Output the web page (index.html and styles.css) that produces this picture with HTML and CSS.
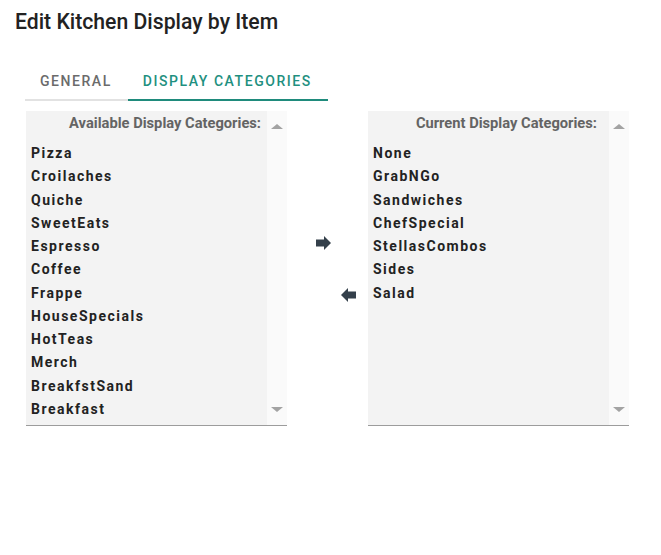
FILE: index.html
```html
<!DOCTYPE html>
<html>
<head>
<meta charset="utf-8">
<title>Edit Kitchen Display by Item</title>
<link rel="stylesheet" href="styles.css">
</head>
<body>
<div class="page">
  <h1 class="title">Edit Kitchen Display by Item</h1>
  <div class="tabs">
    <div class="tab">General</div>
    <div class="tab tab-active">Display Categories</div>
  </div>
  <div class="lists">
    <div class="listbox">
      <div class="list-area">
        <div class="list-header">Available Display Categories:</div>
        <ul class="items">
          <li>Pizza</li>
          <li>Croilaches</li>
          <li>Quiche</li>
          <li>SweetEats</li>
          <li>Espresso</li>
          <li>Coffee</li>
          <li>Frappe</li>
          <li>HouseSpecials</li>
          <li>HotTeas</li>
          <li>Merch</li>
          <li>BreakfstSand</li>
          <li>Breakfast</li>
        </ul>
      </div>
      <div class="scrollbar">
        <span class="tri tri-up"></span>
        <span class="tri tri-down"></span>
      </div>
    </div>
    <div class="movers">
      <button class="mover mover-right" aria-label="Add">
        <svg width="15" height="14" viewBox="0 0 15 14"><rect x="0" y="3.5" width="9" height="7" fill="#34404b"/><polygon points="8,0 15,7 8,14" fill="#34404b"/></svg>
      </button>
      <button class="mover mover-left" aria-label="Remove">
        <svg width="15" height="14" viewBox="0 0 15 14"><rect x="6" y="3.5" width="9" height="7" fill="#34404b"/><polygon points="7,0 0,7 7,14" fill="#34404b"/></svg>
      </button>
    </div>
    <div class="listbox">
      <div class="list-area">
        <div class="list-header list-header-current">Current Display Categories:</div>
        <ul class="items">
          <li>None</li>
          <li>GrabNGo</li>
          <li>Sandwiches</li>
          <li>ChefSpecial</li>
          <li>StellasCombos</li>
          <li>Sides</li>
          <li>Salad</li>
        </ul>
      </div>
      <div class="scrollbar">
        <span class="tri tri-up"></span>
        <span class="tri tri-down"></span>
      </div>
    </div>
  </div>
</div>
</body>
</html>
```
FILE: styles.css
```css
* { box-sizing: border-box; }
html, body { margin: 0; padding: 0; background: #fff; }
body { font-family: Roboto, "Liberation Sans", sans-serif; color: #222; }

.page { padding: 10px 0 0 0; }

.title {
  margin: 0;
  padding-left: 15px;
  font-size: 21.2px;
  line-height: 24px;
  font-weight: 500;
  color: #222;
}

.tabs {
  display: flex;
  margin: 27px 0 0 25px;
}
.tab {
  padding: 10px 16px 8px 15px;
  font-size: 14px;
  line-height: 20px;
  font-weight: 500;
  letter-spacing: 1.55px;
  text-transform: uppercase;
  color: #6b6b6b;
  border-bottom: 2px solid #e2e2e2;
}
.tab-active {
  color: #1f9080;
  border-bottom-color: #1f8b7c;
}

.lists {
  display: flex;
  margin: 10px 0 0 26px;
}
.listbox {
  display: flex;
  width: 261px;
  height: 315px;
  border-bottom: 1px solid #9c9c9c;
}
.list-area {
  flex: 1;
  background: #f3f3f3;
}
.list-header {
  padding: 2px 6px 0 0;
  text-align: right;
  font-size: 14.7px;
  line-height: 20px;
  font-weight: 700;
  color: #646464;
}
.list-header-current { padding-right: 12px; }
.items {
  list-style: none;
  margin: 9px 0 0 0;
  padding: 0 0 0 5px;
}
.items li {
  font-size: 14px;
  line-height: 23.27px;
  font-weight: 700;
  letter-spacing: 1.5px;
  color: #222;
}
.scrollbar {
  width: 20px;
  background: #fafafa;
  display: flex;
  flex-direction: column;
  align-items: center;
  justify-content: space-between;
  padding: 13px 0 13px 0;
}
.tri {
  width: 0;
  height: 0;
  border-left: 6px solid transparent;
  border-right: 6px solid transparent;
}
.tri-up { border-bottom: 5px solid #a3a3a3; }
.tri-down { border-top: 5px solid #a3a3a3; }

.movers {
  width: 81px;
  display: flex;
  flex-direction: column;
  align-items: flex-start;
}
.mover {
  display: block;
  padding: 0;
  margin: 0;
  border: 0;
  background: none;
  line-height: 0;
  cursor: pointer;
}
.mover-right { margin: 125px 0 0 29px; }
.mover-left { margin: 38px 0 0 54px; }
```
